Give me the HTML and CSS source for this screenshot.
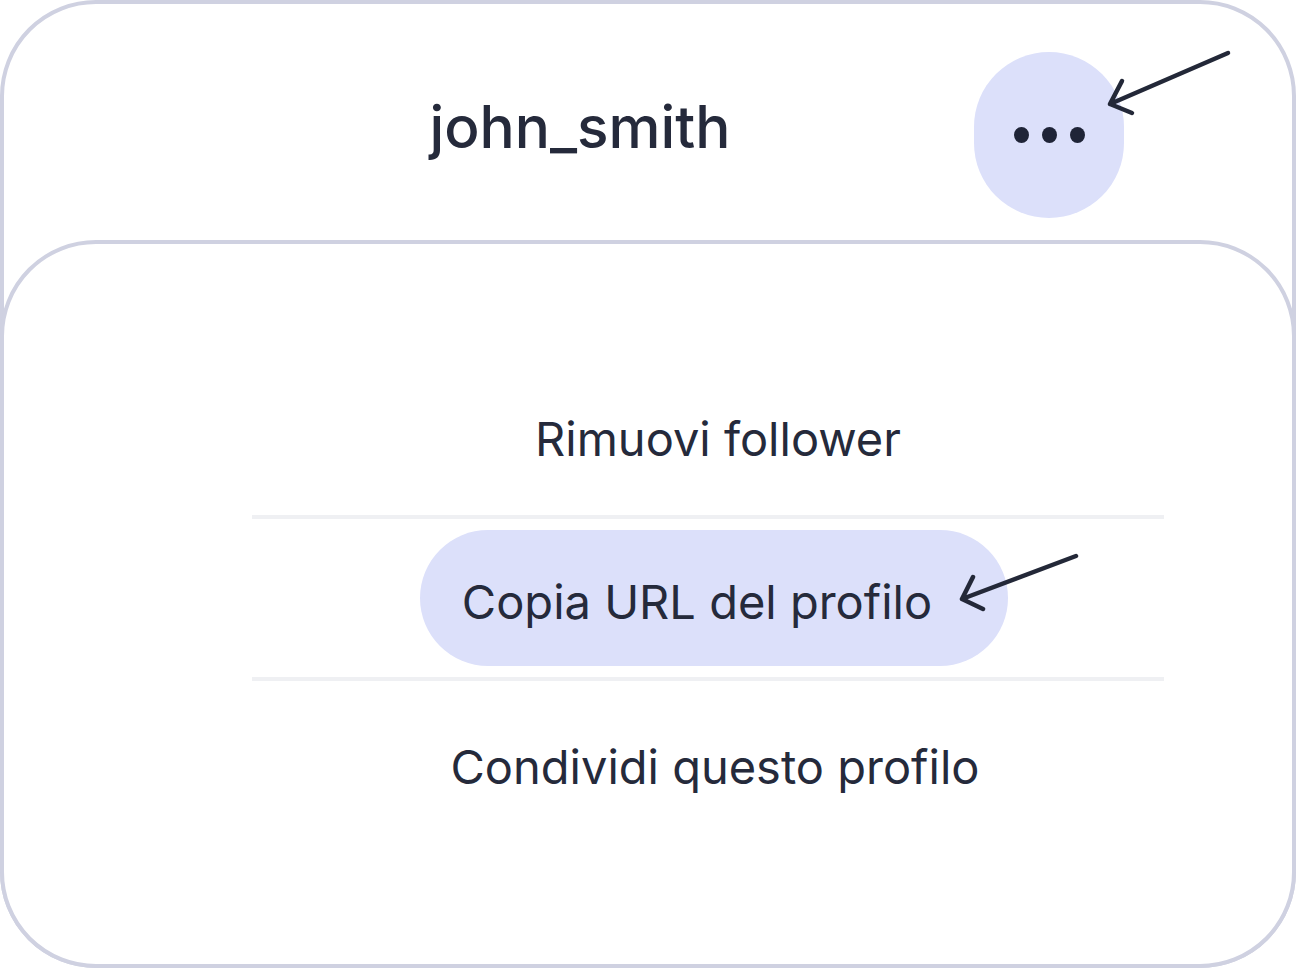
FILE: index.html
```html
<!DOCTYPE html>
<html lang="it">
<head>
<meta charset="utf-8">
<title>john_smith</title>
<link rel="stylesheet" href="styles.css">
</head>
<body>
<div class="card">
  <header class="header">
    <h1 class="title">john_smith</h1>
    <button class="more" aria-label="Altro">
      <span class="dot"></span><span class="dot"></span><span class="dot"></span>
      <svg class="arrow arrow-more" width="130" height="72" viewBox="0 0 130 72">
        <path d="M124 6 L6 57 M18 34 L6 57 L28 66" fill="none" stroke="#232838" stroke-width="4.5" stroke-linecap="round" stroke-linejoin="round"/>
      </svg>
    </button>
  </header>
  <section class="sheet">
    <ul class="menu">
      <li class="item item-first">Rimuovi follower</li>
      <li class="sep"></li>
      <li class="item item-pill">
        <span class="pill">Copia URL del profilo
          <svg class="arrow arrow-pill" width="135" height="70" viewBox="0 0 135 70">
            <path d="M126 6 L12 49 M23 27 L12 49 L33 59" fill="none" stroke="#232838" stroke-width="4.5" stroke-linecap="round" stroke-linejoin="round"/>
          </svg>
        </span>
      </li>
      <li class="sep"></li>
      <li class="item item-last">Condividi questo profilo</li>
    </ul>
  </section>
</div>
</body>
</html>
```
FILE: styles.css
```css
* { box-sizing: border-box; }
html, body { margin: 0; padding: 0; background: #ffffff; }
body {
  font-family: Inter, "Noto Sans", "Liberation Sans", sans-serif;
  color: #252a3b;
  width: 1296px;
  height: 968px;
  overflow: hidden;
}
.card {
  width: 1296px;
  height: 968px;
  border: 4px solid #cfd1e1;
  border-radius: 96px;
  display: flex;
  flex-direction: column;
  background: #fff;
}
.header {
  display: flex;
  align-items: center;
  padding: 48px 168px 22px 182px;
}
.title {
  flex: 1;
  margin: 0 0 16px 0;
  text-align: center;
  font-size: 58.5px;
  line-height: 1;
  font-weight: 500;
  letter-spacing: 0;
}
.more {
  position: relative;
  width: 150px;
  height: 166px;
  border: 0;
  padding: 0;
  border-radius: 75px;
  background: #dce0fa;
  display: flex;
  align-items: center;
  justify-content: center;
  gap: 13px;
}
.dot {
  width: 15px;
  height: 16px;
  border-radius: 50%;
  background: #1f2437;
}
.arrow { position: absolute; overflow: visible; }
.arrow-more { left: 130px; top: -5px; }
.sheet {
  flex: 1;
  margin: 0 -4px -4px -4px;
  border: 4px solid #cfd1e1;
  border-radius: 96px;
  background: #fff;
}
.menu {
  list-style: none;
  margin: 0;
  padding: 113px 128px 0 248px;
}
.item {
  height: 158px;
  display: flex;
  align-items: center;
  justify-content: center;
  padding: 6px 0 0 14px;
  font-size: 47px;
  line-height: 1.2;
  font-weight: 400;
}
.item-first { padding-left: 20px; }
.item-pill { padding-top: 0; padding-left: 12px; }
.item-last { padding-top: 14px; }
.sep {
  height: 4px;
  background: #eff0f3;
}
.pill {
  position: relative;
  height: 136px;
  display: inline-flex;
  align-items: center;
  padding: 8px 76px 0 42px;
  border-radius: 68px;
  background: #dce0fa;
}
.arrow-pill { left: 530px; top: 20px; }
```
